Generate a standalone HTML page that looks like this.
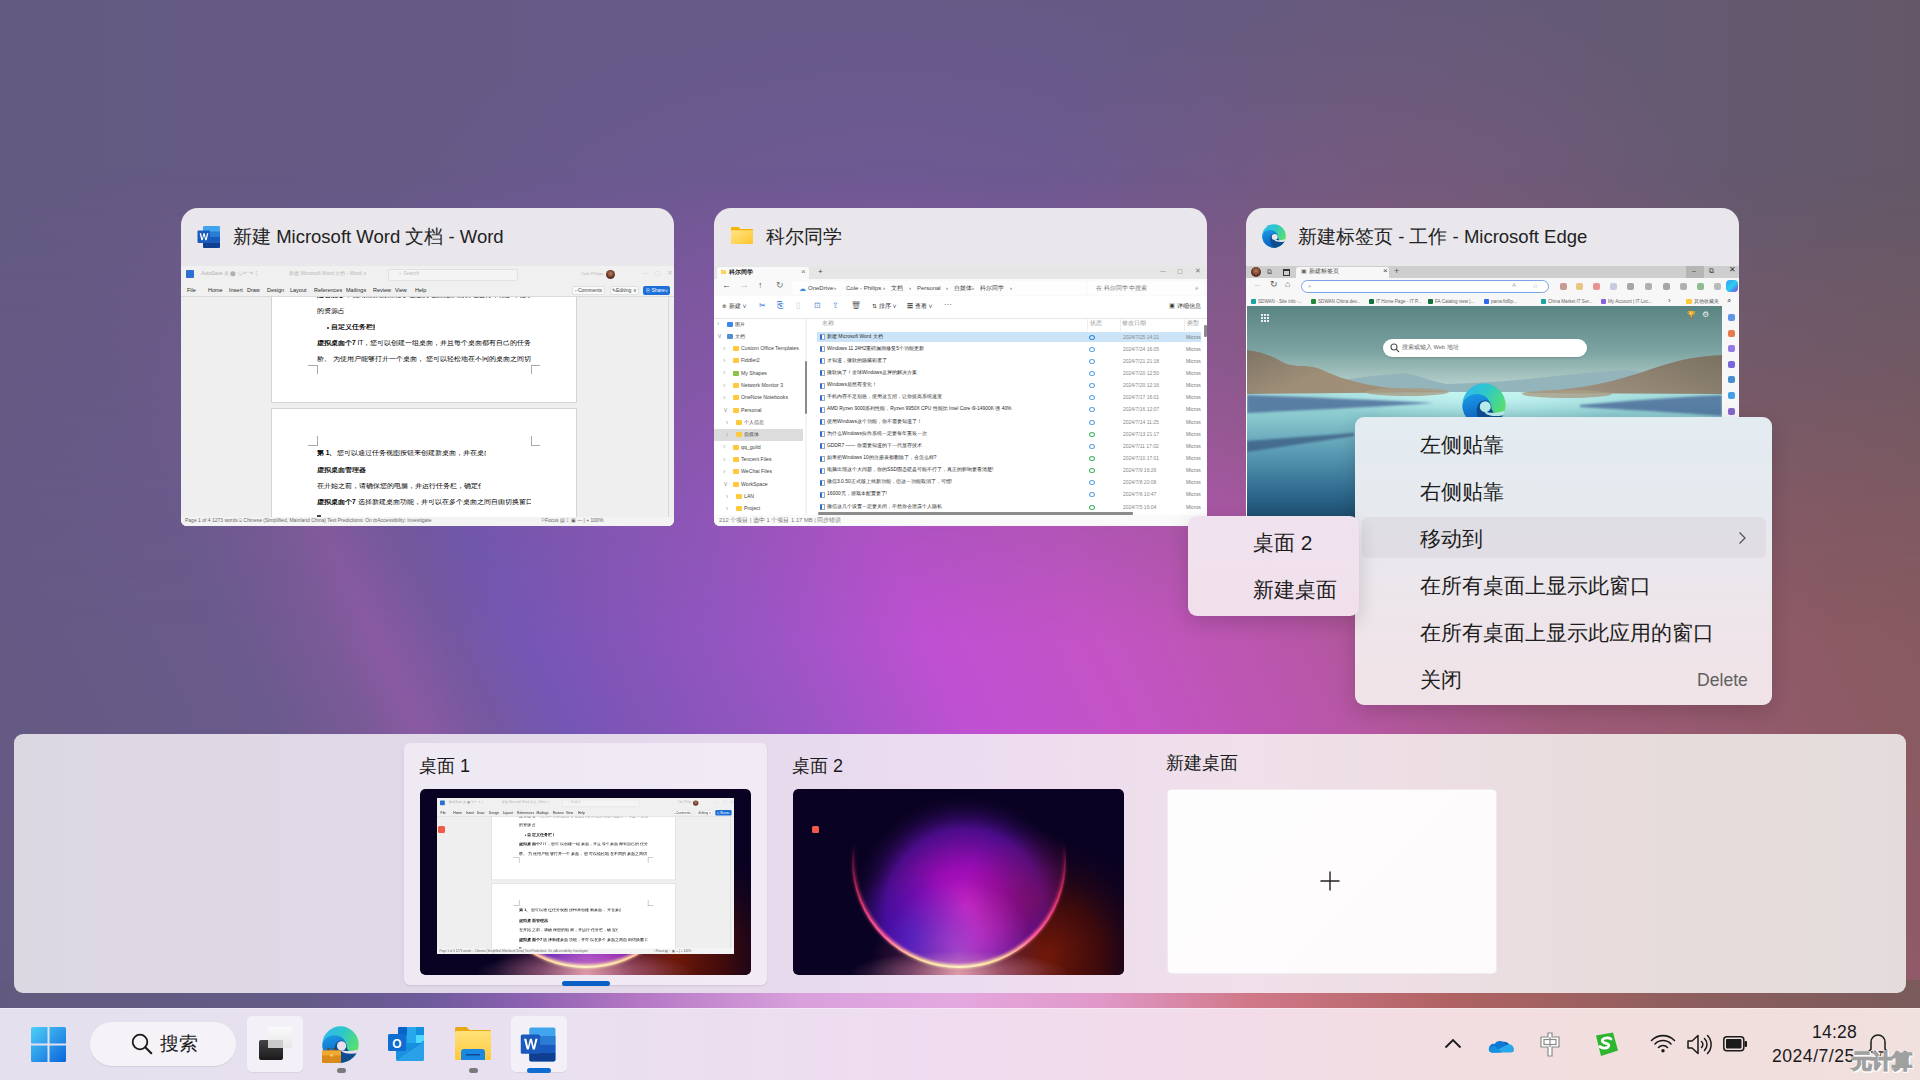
<!DOCTYPE html><html><head><meta charset="utf-8"><style>
*{box-sizing:border-box;margin:0;padding:0}
html,body{width:1920px;height:1080px;overflow:hidden}
body{position:relative;font-family:"Liberation Sans",sans-serif;color:#1a1a1a;background:#645a7e}
.a{position:absolute}
.t{position:absolute;white-space:nowrap;line-height:1}
#bg{position:absolute;left:0;top:0;width:1920px;height:1080px;
background:
 radial-gradient(ellipse 520px 260px at 900px 240px, rgba(118,88,160,0.6), rgba(118,88,160,0) 100%),
 radial-gradient(ellipse 380px 300px at 1380px 280px, rgba(128,90,125,0.8), rgba(128,90,125,0) 100%),
 radial-gradient(ellipse 420px 380px at 120px 760px, rgba(114,90,150,0.55), rgba(114,90,150,0) 100%),
 linear-gradient(90deg, #635a80 0%, #665a88 30%, #655a86 55%, #645a78 78%, #645868 100%);}
#bg2{position:absolute;left:0;top:0;width:1920px;height:1080px;
background:linear-gradient(65deg,#635a80 0%,#665a86 12%,#6a5a8c 18%,#7a5a98 22%,#8a5aa2 24%,#7558a0 27%,#7456b4 30%,#8455b8 34%,#9a55c4 40%,#c050d2 47%,#c454c4 54%,#b856a8 62%,#a05a7a 71%,#8a5a62 85%,#7e5a5a 100%);
-webkit-mask-image:linear-gradient(to bottom, rgba(0,0,0,0) 170px, rgba(0,0,0,0.4) 360px, rgba(0,0,0,0.8) 520px, rgba(0,0,0,1) 640px);}
.card{position:absolute;top:208px;width:493px;height:318px;border-radius:17px 17px 6px 6px;overflow:hidden;background:#e9e7ec}
.ttl{position:absolute;top:19px;font-size:18.5px;line-height:20px;color:#222;white-space:nowrap}
.body{position:absolute;left:0;top:58px;width:493px;height:260px;background:#fff;overflow:hidden}
.menu{position:absolute;border-radius:9px;box-shadow:0 6px 20px rgba(0,0,0,0.16)}
.mi{position:absolute;font-size:21px;line-height:24px;color:#1c1c1c;white-space:nowrap}
.dl{position:absolute;font-size:18px;line-height:20px;color:#1a1a1a;white-space:nowrap}
</style></head><body><div id="bg"></div><div id="bg2"></div>
<div class="card" style="left:181px"><svg class="a" style="left:16px;top:17px" width="24" height="24" viewBox="0 0 24 24">
<defs><linearGradient id="wg16" x1="0" y1="0" x2="0" y2="1"><stop offset="0" stop-color="#41a5ee"/><stop offset="0.33" stop-color="#2b7cd3"/><stop offset="0.66" stop-color="#185abd"/><stop offset="1" stop-color="#103f91"/></linearGradient></defs>
<rect x="6" y="1" width="17" height="22" rx="1.2" fill="#41a5ee"/>
<rect x="6" y="6.5" width="17" height="5.5" fill="#2b7cd3"/>
<rect x="6" y="12" width="17" height="5.5" fill="#185abd"/>
<path d="M6 17.5h17v4.3a1.2 1.2 0 0 1-1.2 1.2H7.2A1.2 1.2 0 0 1 6 21.8z" fill="#103f91"/>
<rect x="0.5" y="5.5" width="12.5" height="12.5" rx="1" fill="#185abd"/>
<path d="M2.6 8.3h1.5l1.1 5.2 1.2-5.2h1.3l1.2 5.2 1.1-5.2h1.4l-1.8 7h-1.3L7 10.2l-1.3 5.1H4.4z" fill="#fff"/>
</svg><div class="ttl" style="left:52px">新建 Microsoft Word 文档 - Word</div><div class="body"><div class="a" style="left:0px;top:31px;width:493px;height:220px;background:#efefef;"></div><div class="a" style="left:487px;top:31px;width:1px;height:220px;background:#d8d8d8;"></div><div class="a" style="left:90px;top:20px;width:306px;height:117px;background:#fff;border:1px solid #d4d4d4;border-top:none"></div><div class="a" style="left:90px;top:142px;width:306px;height:110px;background:#fff;border:1px solid #d4d4d4;border-bottom:none"></div><div class="a" style="left:127px;top:99px;width:9px;height:1px;background:#aaa;"></div><div class="a" style="left:136px;top:99px;width:1px;height:9px;background:#aaa;"></div><div class="a" style="left:350px;top:99px;width:9px;height:1px;background:#aaa;"></div><div class="a" style="left:350px;top:99px;width:1px;height:9px;background:#aaa;"></div><div class="a" style="left:127px;top:179px;width:9px;height:1px;background:#aaa;"></div><div class="a" style="left:136px;top:170px;width:1px;height:10px;background:#aaa;"></div><div class="a" style="left:350px;top:179px;width:9px;height:1px;background:#aaa;"></div><div class="a" style="left:350px;top:170px;width:1px;height:10px;background:#aaa;"></div><div class="t" style="left:136px;top:26px;width:214px;overflow:hidden;font-size:6.6px;color:#000;font-weight:500"><b>是否能够</b>，使用虚拟桌面能够让您的电脑更加流畅地运行，减少不必要的卡顿现象，提高</div><div class="t" style="left:136px;top:42px;width:28px;overflow:hidden;font-size:6.6px;color:#000;font-weight:500">的资源占用。</div><div class="a" style="left:146px;top:61px;width:2px;height:2px;background:#222;border-radius:50%"></div><div class="t" style="left:150px;top:58px;width:44px;overflow:hidden;font-size:6.6px;color:#111;font-weight:bold">自定义任务栏图标</div><div class="t" style="left:136px;top:74px;width:214px;overflow:hidden;font-size:6.6px;color:#000;font-weight:500"><b>虚拟桌面个7</b> IT，您可以创建一组桌面，并且每个桌面都有自己的任务栏，使用起来</div><div class="t" style="left:136px;top:90px;width:214px;overflow:hidden;font-size:6.6px;color:#000;font-weight:500">桥。 为使用户能够打开一个桌面， 您可以轻松地在不同的桌面之间切换和移动窗口</div><div class="t" style="left:136px;top:184px;width:169px;overflow:hidden;font-size:6.6px;color:#000;font-weight:500"><b>第 1、</b>您可以通过任务视图按钮来创建新桌面，并在桌面之间切换。</div><div class="t" style="left:136px;top:201px;width:49px;overflow:hidden;font-size:6.6px;color:#111;font-weight:bold">虚拟桌面管理器</div><div class="t" style="left:136px;top:217px;width:164px;overflow:hidden;font-size:6.6px;color:#000;font-weight:500">在开始之前，请确保您的电脑，并运行任务栏，确定任务视图按钮。</div><div class="t" style="left:136px;top:233px;width:214px;overflow:hidden;font-size:6.6px;color:#000;font-weight:500"><b>虚拟桌面个7</b> 选择新建桌面功能，并可以在多个桌面之间自由切换窗口和应用程序</div><div class="a" style="left:136px;top:249px;width:4px;height:2px;background:#444;"></div><div class="a" style="left:0px;top:0px;width:493px;height:31px;background:#f0f0f0;"></div><div class="a" style="left:5px;top:4px;width:8px;height:8px;background:#2b6fd0;border-radius:1px"></div><div class="t" style="left:20px;top:5px;font-size:5px;color:#b0b0b0;font-weight:normal;">AutoSave 关 ⬤ 🖫 ↶ ↷ ⋮</div><div class="t" style="left:108px;top:5px;font-size:5px;color:#b8b8b8;font-weight:normal;">新建 Microsoft Word 文档 - Word ∨</div><div class="a" style="left:207px;top:3px;width:130px;height:12px;background:#f4f4f4;border:1px solid #e2e2e2;border-radius:2px"></div><div class="t" style="left:218px;top:5px;font-size:5px;color:#c0c0c0;font-weight:normal;">⌕ Search</div><div class="t" style="left:400px;top:5.5px;font-size:4.3px;color:#b8b8b8;font-weight:normal;">Cole Philips</div><div class="a" style="left:425px;top:4px;width:9px;height:9px;background:radial-gradient(circle at 50% 40%,#c08060,#603020 60%,#404050);border-radius:50%"></div><div class="t" style="left:461px;top:4px;font-size:6px;color:#d0d0d0;font-weight:normal;">—</div><div class="t" style="left:474px;top:4px;font-size:6px;color:#d0d0d0;font-weight:normal;">▢</div><div class="t" style="left:486px;top:3px;font-size:7px;color:#c8c8c8;font-weight:normal;">✕</div><div class="t" style="left:6px;top:22px;font-size:5.5px;color:#2a2a2a;font-weight:normal;">File</div><div class="t" style="left:27px;top:22px;font-size:5.5px;color:#2a2a2a;font-weight:normal;">Home</div><div class="t" style="left:48px;top:22px;font-size:5.5px;color:#2a2a2a;font-weight:normal;">Insert</div><div class="t" style="left:66px;top:22px;font-size:5.5px;color:#2a2a2a;font-weight:normal;">Draw</div><div class="t" style="left:86px;top:22px;font-size:5.5px;color:#2a2a2a;font-weight:normal;">Design</div><div class="t" style="left:109px;top:22px;font-size:5.5px;color:#2a2a2a;font-weight:normal;">Layout</div><div class="t" style="left:133px;top:22px;font-size:5.5px;color:#2a2a2a;font-weight:normal;">References</div><div class="t" style="left:165px;top:22px;font-size:5.5px;color:#2a2a2a;font-weight:normal;">Mailings</div><div class="t" style="left:192px;top:22px;font-size:5.5px;color:#2a2a2a;font-weight:normal;">Review</div><div class="t" style="left:214px;top:22px;font-size:5.5px;color:#2a2a2a;font-weight:normal;">View</div><div class="t" style="left:234px;top:22px;font-size:5.5px;color:#2a2a2a;font-weight:normal;">Help</div><div class="a" style="left:391px;top:20px;width:33px;height:9px;background:#fafafa;border:1px solid #e0e0e0;border-radius:2px"></div><div class="t" style="left:394px;top:22px;font-size:5px;color:#444;font-weight:normal;">⌐Comments</div><div class="a" style="left:429px;top:20px;width:29px;height:9px;background:#fafafa;border:1px solid #e0e0e0;border-radius:2px"></div><div class="t" style="left:431px;top:22px;font-size:5px;color:#444;font-weight:normal;">✎Editing ∨</div><div class="a" style="left:462px;top:20px;width:27px;height:9px;background:#1f6fd8;border-radius:2px"></div><div class="t" style="left:465px;top:22px;font-size:5px;color:#fff;font-weight:normal;">⎘ Share∨</div><div class="a" style="left:0px;top:30px;width:493px;height:1px;background:#dadada;"></div><div class="a" style="left:0px;top:251px;width:493px;height:9px;background:#f3f3f3;"></div><div class="t" style="left:4px;top:252px;font-size:5px;color:#6a6a6a;font-weight:normal;">Page 1 of 4   1273 words   ⌸   Chinese (Simplified, Mainland China)   Text Predictions: On   ⚙Accessibility: Investigate</div><div class="t" style="left:360px;top:252px;font-size:5px;color:#666;font-weight:normal;">⚐Focus    ▤    ⌶    ▣    —         |          +  100%</div></div></div>
<div class="card" style="left:714px"><svg class="a" style="left:17px;top:19px" width="22" height="17" viewBox="0 0 22 17" preserveAspectRatio="none">
<defs><linearGradient id="fg1719" x1="0" y1="0" x2="1" y2="1"><stop offset="0" stop-color="#ffe38a"/><stop offset="1" stop-color="#ffc629"/></linearGradient></defs>
<path d="M0 1a1 1 0 0 1 1-1h6.5l1.8 2H21a1 1 0 0 1 1 1v2H0z" fill="#f5b400"/>
<rect x="0" y="3.2" width="22" height="13.8" rx="1" fill="url(#fg1719)"/>
</svg><div class="ttl" style="left:52px">科尔同学</div><div class="body"><div class="a" style="left:0px;top:0px;width:493px;height:13px;background:#e6e6e6;"></div><div class="a" style="left:3px;top:1px;width:92px;height:12px;background:#f9f9f9;border-radius:3px 3px 0 0"></div><svg class="a" style="left:7px;top:4px" width="5" height="4" viewBox="0 0 22 17" preserveAspectRatio="none">
<defs><linearGradient id="fg74" x1="0" y1="0" x2="1" y2="1"><stop offset="0" stop-color="#ffe38a"/><stop offset="1" stop-color="#ffc629"/></linearGradient></defs>
<path d="M0 1a1 1 0 0 1 1-1h6.5l1.8 2H21a1 1 0 0 1 1 1v2H0z" fill="#f5b400"/>
<rect x="0" y="3.2" width="22" height="13.8" rx="1" fill="url(#fg74)"/>
</svg><div class="t" style="left:15px;top:3px;font-size:6px;color:#222;font-weight:bold;">科尔同学</div><div class="t" style="left:87px;top:2px;font-size:8px;color:#777;font-weight:normal;">×</div><div class="t" style="left:104px;top:2px;font-size:8px;color:#444;font-weight:normal;">+</div><div class="t" style="left:446px;top:2px;font-size:6px;color:#777;font-weight:normal;">—</div><div class="t" style="left:463px;top:2px;font-size:6px;color:#777;font-weight:normal;">▢</div><div class="t" style="left:481px;top:1px;font-size:7px;color:#777;font-weight:normal;">✕</div><div class="a" style="left:0px;top:13px;width:493px;height:17px;background:#f9f9f9;"></div><div class="t" style="left:8px;top:15px;font-size:9px;color:#555;font-weight:normal;">←</div><div class="t" style="left:26px;top:15px;font-size:9px;color:#bbb;font-weight:normal;">→</div><div class="t" style="left:44px;top:15px;font-size:9px;color:#555;font-weight:normal;">↑</div><div class="t" style="left:62px;top:15px;font-size:9px;color:#777;font-weight:normal;">↻</div><div class="a" style="left:78px;top:15px;width:294px;height:14px;background:#fdfdfd;border-radius:3px"></div><div class="t" style="left:85px;top:19px;font-size:7px;color:#3a8ad8;font-weight:normal;">☁</div><div class="t" style="left:94px;top:19px;font-size:6px;color:#444;font-weight:normal;">OneDrive</div><div class="t" style="left:120px;top:19px;font-size:6px;color:#444;font-weight:normal;">›</div><div class="t" style="left:132px;top:19px;font-size:6px;color:#444;font-weight:normal;">Cole - Philips</div><div class="t" style="left:169px;top:19px;font-size:6px;color:#444;font-weight:normal;">›</div><div class="t" style="left:177px;top:19px;font-size:6px;color:#444;font-weight:normal;">文档</div><div class="t" style="left:195px;top:19px;font-size:6px;color:#444;font-weight:normal;">›</div><div class="t" style="left:203px;top:19px;font-size:6px;color:#444;font-weight:normal;">Personal</div><div class="t" style="left:232px;top:19px;font-size:6px;color:#444;font-weight:normal;">›</div><div class="t" style="left:240px;top:19px;font-size:6px;color:#444;font-weight:normal;">自媒体</div><div class="t" style="left:258px;top:19px;font-size:6px;color:#444;font-weight:normal;">›</div><div class="t" style="left:266px;top:19px;font-size:6px;color:#444;font-weight:normal;">科尔同学</div><div class="t" style="left:296px;top:19px;font-size:6px;color:#444;font-weight:normal;">›</div><div class="a" style="left:374px;top:15px;width:116px;height:14px;background:#fdfdfd;border-radius:3px"></div><div class="t" style="left:382px;top:19px;font-size:6.2px;color:#777;font-weight:normal;">在 科尔同学 中搜索</div><div class="t" style="left:481px;top:18px;font-size:7px;color:#666;font-weight:normal;">⌕</div><div class="a" style="left:0px;top:30px;width:493px;height:22px;background:#ffffff;"></div><div class="t" style="left:8px;top:37px;font-size:6px;color:#333;font-weight:normal;">⊕ 新建 ∨</div><div class="t" style="left:45px;top:36px;font-size:8px;color:#2d6fd4;font-weight:normal;">✂</div><div class="t" style="left:63px;top:36px;font-size:8px;color:#3a7ad0;font-weight:normal;">⎘</div><div class="t" style="left:82px;top:36px;font-size:8px;color:#ccc;font-weight:normal;">▯</div><div class="t" style="left:100px;top:36px;font-size:8px;color:#5588cc;font-weight:normal;">⊡</div><div class="t" style="left:118px;top:36px;font-size:8px;color:#4a88dd;font-weight:normal;">⇪</div><div class="t" style="left:137px;top:36px;font-size:8px;color:#666;font-weight:normal;">🗑</div><div class="t" style="left:158px;top:37px;font-size:6px;color:#333;font-weight:normal;">⇅ 排序 ∨</div><div class="t" style="left:193px;top:37px;font-size:6px;color:#333;font-weight:normal;">☰ 查看 ∨</div><div class="t" style="left:230px;top:35px;font-size:8px;color:#333;font-weight:normal;">···</div><div class="t" style="left:455px;top:37px;font-size:6px;color:#333;font-weight:normal;">▣ 详细信息</div><div class="a" style="left:0px;top:52px;width:493px;height:1px;background:#e6e6e6;"></div><div class="t" style="left:3px;top:54.0px;font-size:7px;color:#aaa;font-weight:normal;">›</div><div class="a" style="left:13px;top:55.5px;width:6px;height:5px;background:#3a88e8;border-radius:1px"></div><div class="t" style="left:21px;top:55.5px;font-size:5.2px;color:#444;font-weight:normal;">图片</div><div class="t" style="left:3px;top:66.33px;font-size:7px;color:#aaa;font-weight:normal;">∨</div><div class="a" style="left:13px;top:67.83px;width:6px;height:5px;background:#5090d0;border-radius:1px"></div><div class="t" style="left:21px;top:67.83px;font-size:5.2px;color:#444;font-weight:normal;">文档</div><div class="t" style="left:9px;top:78.66px;font-size:7px;color:#aaa;font-weight:normal;">›</div><div class="a" style="left:19px;top:80.16px;width:6px;height:5px;background:#ffc83d;border-radius:1px"></div><div class="t" style="left:27px;top:80.16px;font-size:5.2px;color:#444;font-weight:normal;">Custom Office Templates</div><div class="t" style="left:9px;top:90.99000000000001px;font-size:7px;color:#aaa;font-weight:normal;">›</div><div class="a" style="left:19px;top:92.49000000000001px;width:6px;height:5px;background:#ffc83d;border-radius:1px"></div><div class="t" style="left:27px;top:92.49000000000001px;font-size:5.2px;color:#444;font-weight:normal;">Fiddler2</div><div class="t" style="left:9px;top:103.32px;font-size:7px;color:#aaa;font-weight:normal;">›</div><div class="a" style="left:19px;top:104.82px;width:6px;height:5px;background:#8bc34a;border-radius:1px"></div><div class="t" style="left:27px;top:104.82px;font-size:5.2px;color:#444;font-weight:normal;">My Shapes</div><div class="t" style="left:9px;top:115.65px;font-size:7px;color:#aaa;font-weight:normal;">›</div><div class="a" style="left:19px;top:117.15px;width:6px;height:5px;background:#ffc83d;border-radius:1px"></div><div class="t" style="left:27px;top:117.15px;font-size:5.2px;color:#444;font-weight:normal;">Network Monitor 3</div><div class="t" style="left:9px;top:127.98000000000002px;font-size:7px;color:#aaa;font-weight:normal;">›</div><div class="a" style="left:19px;top:129.48000000000002px;width:6px;height:5px;background:#ffc83d;border-radius:1px"></div><div class="t" style="left:27px;top:129.48000000000002px;font-size:5.2px;color:#444;font-weight:normal;">OneNote Notebooks</div><div class="t" style="left:9px;top:140.31px;font-size:7px;color:#aaa;font-weight:normal;">∨</div><div class="a" style="left:19px;top:141.81px;width:6px;height:5px;background:#ffc83d;border-radius:1px"></div><div class="t" style="left:27px;top:141.81px;font-size:5.2px;color:#444;font-weight:normal;">Personal</div><div class="t" style="left:12px;top:152.64px;font-size:7px;color:#aaa;font-weight:normal;">›</div><div class="a" style="left:22px;top:154.14px;width:6px;height:5px;background:#ffc83d;border-radius:1px"></div><div class="t" style="left:30px;top:154.14px;font-size:5.2px;color:#444;font-weight:normal;">个人信息</div><div class="a" style="left:0px;top:162.97px;width:89px;height:12px;background:#dcdcdc;"></div><div class="t" style="left:12px;top:164.97px;font-size:7px;color:#aaa;font-weight:normal;">›</div><div class="a" style="left:22px;top:166.47px;width:6px;height:5px;background:#ffc83d;border-radius:1px"></div><div class="t" style="left:30px;top:166.47px;font-size:5.2px;color:#444;font-weight:normal;">自媒体</div><div class="t" style="left:9px;top:177.3px;font-size:7px;color:#aaa;font-weight:normal;">›</div><div class="a" style="left:19px;top:178.8px;width:6px;height:5px;background:#ffc83d;border-radius:1px"></div><div class="t" style="left:27px;top:178.8px;font-size:5.2px;color:#444;font-weight:normal;">qq_guild</div><div class="t" style="left:9px;top:189.63px;font-size:7px;color:#aaa;font-weight:normal;">›</div><div class="a" style="left:19px;top:191.13px;width:6px;height:5px;background:#ffc83d;border-radius:1px"></div><div class="t" style="left:27px;top:191.13px;font-size:5.2px;color:#444;font-weight:normal;">Tencent Files</div><div class="t" style="left:9px;top:201.96px;font-size:7px;color:#aaa;font-weight:normal;">›</div><div class="a" style="left:19px;top:203.46px;width:6px;height:5px;background:#ffc83d;border-radius:1px"></div><div class="t" style="left:27px;top:203.46px;font-size:5.2px;color:#444;font-weight:normal;">WeChat Files</div><div class="t" style="left:9px;top:214.29px;font-size:7px;color:#aaa;font-weight:normal;">∨</div><div class="a" style="left:19px;top:215.79px;width:6px;height:5px;background:#ffc83d;border-radius:1px"></div><div class="t" style="left:27px;top:215.79px;font-size:5.2px;color:#444;font-weight:normal;">WorkSpace</div><div class="t" style="left:12px;top:226.62px;font-size:7px;color:#aaa;font-weight:normal;">›</div><div class="a" style="left:22px;top:228.12px;width:6px;height:5px;background:#ffc83d;border-radius:1px"></div><div class="t" style="left:30px;top:228.12px;font-size:5.2px;color:#444;font-weight:normal;">LAN</div><div class="t" style="left:12px;top:238.95px;font-size:7px;color:#aaa;font-weight:normal;">›</div><div class="a" style="left:22px;top:240.45px;width:6px;height:5px;background:#ffc83d;border-radius:1px"></div><div class="t" style="left:30px;top:240.45px;font-size:5.2px;color:#444;font-weight:normal;">Project</div><div class="a" style="left:91px;top:53px;width:2px;height:198px;background:#f4f4f4;"></div><div class="a" style="left:91px;top:95px;width:2px;height:53px;background:#8a8a8a;border-radius:1px"></div><div class="t" style="left:108px;top:55px;font-size:5.5px;color:#999;font-weight:normal;">名称</div><div class="a" style="left:373px;top:53px;width:1px;height:12px;background:#eee;"></div><div class="t" style="left:376px;top:55px;font-size:5.5px;color:#999;font-weight:normal;">状态</div><div class="a" style="left:406px;top:53px;width:1px;height:12px;background:#eee;"></div><div class="t" style="left:408px;top:55px;font-size:5.5px;color:#999;font-weight:normal;">修改日期</div><div class="a" style="left:470px;top:53px;width:1px;height:12px;background:#eee;"></div><div class="t" style="left:473px;top:55px;font-size:5.5px;color:#999;font-weight:normal;">类型</div><div class="a" style="left:103px;top:65.5px;width:384px;height:10px;background:#cce4f7;"></div><div class="a" style="left:106px;top:68.0px;width:5px;height:6px;background:#fff;border:1px solid #9ab;border-left:2px solid #2f6bd0;border-radius:1px"></div><div class="t" style="left:113px;top:68.5px;font-size:4.9px;color:#2a2a2a;font-weight:normal;">新建 Microsoft Word 文档</div><div class="a" style="left:375px;top:68.5px;width:6px;height:5px;background:transparent;border:1px solid #2a88d8;border-radius:50%"></div><div class="t" style="left:409px;top:68.5px;font-size:5px;color:#888;font-weight:normal;">2024/7/25 14:21</div><div class="t" style="left:472px;top:68.5px;font-size:5px;color:#777;font-weight:normal;">Micros</div><div class="a" style="left:106px;top:80.15px;width:5px;height:6px;background:#fff;border:1px solid #9ab;border-left:2px solid #2f6bd0;border-radius:1px"></div><div class="t" style="left:113px;top:80.65px;font-size:4.9px;color:#2a2a2a;font-weight:normal;">Windows 11 24H2重磅漏洞修复5个功能更新</div><div class="a" style="left:375px;top:80.65px;width:6px;height:5px;background:transparent;border:1px solid #5aa0e0;border-radius:50%"></div><div class="t" style="left:409px;top:80.65px;font-size:5px;color:#888;font-weight:normal;">2024/7/24 16:05</div><div class="t" style="left:472px;top:80.65px;font-size:5px;color:#777;font-weight:normal;">Micros</div><div class="a" style="left:106px;top:92.3px;width:5px;height:6px;background:#fff;border:1px solid #9ab;border-left:2px solid #2f6bd0;border-radius:1px"></div><div class="t" style="left:113px;top:92.8px;font-size:4.9px;color:#2a2a2a;font-weight:normal;">才知道，微软的隐藏彩蛋了</div><div class="a" style="left:375px;top:92.8px;width:6px;height:5px;background:transparent;border:1px solid #5aa0e0;border-radius:50%"></div><div class="t" style="left:409px;top:92.8px;font-size:5px;color:#888;font-weight:normal;">2024/7/21 21:18</div><div class="t" style="left:472px;top:92.8px;font-size:5px;color:#777;font-weight:normal;">Micros</div><div class="a" style="left:106px;top:104.45px;width:5px;height:6px;background:#fff;border:1px solid #9ab;border-left:2px solid #2f6bd0;border-radius:1px"></div><div class="t" style="left:113px;top:104.95px;font-size:4.9px;color:#2a2a2a;font-weight:normal;">微软疯了！全球Windows蓝屏的解决方案</div><div class="a" style="left:375px;top:104.95px;width:6px;height:5px;background:transparent;border:1px solid #5aa0e0;border-radius:50%"></div><div class="t" style="left:409px;top:104.95px;font-size:5px;color:#888;font-weight:normal;">2024/7/20 12:50</div><div class="t" style="left:472px;top:104.95px;font-size:5px;color:#777;font-weight:normal;">Micros</div><div class="a" style="left:106px;top:116.6px;width:5px;height:6px;background:#fff;border:1px solid #9ab;border-left:2px solid #2f6bd0;border-radius:1px"></div><div class="t" style="left:113px;top:117.1px;font-size:4.9px;color:#2a2a2a;font-weight:normal;">Windows居然有变化！</div><div class="a" style="left:375px;top:117.1px;width:6px;height:5px;background:transparent;border:1px solid #5aa0e0;border-radius:50%"></div><div class="t" style="left:409px;top:117.1px;font-size:5px;color:#888;font-weight:normal;">2024/7/20 12:16</div><div class="t" style="left:472px;top:117.1px;font-size:5px;color:#777;font-weight:normal;">Micros</div><div class="a" style="left:106px;top:128.75px;width:5px;height:6px;background:#fff;border:1px solid #9ab;border-left:2px solid #2f6bd0;border-radius:1px"></div><div class="t" style="left:113px;top:129.25px;font-size:4.9px;color:#2a2a2a;font-weight:normal;">手机内存不足别急，使用这五招，让你提高系统速度</div><div class="a" style="left:375px;top:129.25px;width:6px;height:5px;background:transparent;border:1px solid #5aa0e0;border-radius:50%"></div><div class="t" style="left:409px;top:129.25px;font-size:5px;color:#888;font-weight:normal;">2024/7/17 16:01</div><div class="t" style="left:472px;top:129.25px;font-size:5px;color:#777;font-weight:normal;">Micros</div><div class="a" style="left:106px;top:140.9px;width:5px;height:6px;background:#fff;border:1px solid #9ab;border-left:2px solid #2f6bd0;border-radius:1px"></div><div class="t" style="left:113px;top:141.4px;font-size:4.9px;color:#2a2a2a;font-weight:normal;">AMD Ryzen 9000系列性能，Ryzen 9950X CPU 性能比 Intel Core i9-14900K 强 40%</div><div class="a" style="left:375px;top:141.4px;width:6px;height:5px;background:transparent;border:1px solid #5aa0e0;border-radius:50%"></div><div class="t" style="left:409px;top:141.4px;font-size:5px;color:#888;font-weight:normal;">2024/7/16 12:07</div><div class="t" style="left:472px;top:141.4px;font-size:5px;color:#777;font-weight:normal;">Micros</div><div class="a" style="left:106px;top:153.05px;width:5px;height:6px;background:#fff;border:1px solid #9ab;border-left:2px solid #2f6bd0;border-radius:1px"></div><div class="t" style="left:113px;top:153.55px;font-size:4.9px;color:#2a2a2a;font-weight:normal;">使用Windows这个功能，你不需要知道了！</div><div class="a" style="left:375px;top:153.55px;width:6px;height:5px;background:transparent;border:1px solid #5aa0e0;border-radius:50%"></div><div class="t" style="left:409px;top:153.55px;font-size:5px;color:#888;font-weight:normal;">2024/7/14 11:25</div><div class="t" style="left:472px;top:153.55px;font-size:5px;color:#777;font-weight:normal;">Micros</div><div class="a" style="left:106px;top:165.2px;width:5px;height:6px;background:#fff;border:1px solid #9ab;border-left:2px solid #2f6bd0;border-radius:1px"></div><div class="t" style="left:113px;top:165.7px;font-size:4.9px;color:#2a2a2a;font-weight:normal;">为什么Windows操作系统一定要每年重装一次</div><div class="a" style="left:375px;top:165.7px;width:6px;height:5px;background:transparent;border:1px solid #3cb05a;border-radius:50%"></div><div class="t" style="left:409px;top:165.7px;font-size:5px;color:#888;font-weight:normal;">2024/7/13 21:17</div><div class="t" style="left:472px;top:165.7px;font-size:5px;color:#777;font-weight:normal;">Micros</div><div class="a" style="left:106px;top:177.35000000000002px;width:5px;height:6px;background:#fff;border:1px solid #9ab;border-left:2px solid #2f6bd0;border-radius:1px"></div><div class="t" style="left:113px;top:177.85000000000002px;font-size:4.9px;color:#2a2a2a;font-weight:normal;">GDDR7 —— 你需要知道的下一代显存技术</div><div class="a" style="left:375px;top:177.85000000000002px;width:6px;height:5px;background:transparent;border:1px solid #5aa0e0;border-radius:50%"></div><div class="t" style="left:409px;top:177.85000000000002px;font-size:5px;color:#888;font-weight:normal;">2024/7/11 17:02</div><div class="t" style="left:472px;top:177.85000000000002px;font-size:5px;color:#777;font-weight:normal;">Micros</div><div class="a" style="left:106px;top:189.5px;width:5px;height:6px;background:#fff;border:1px solid #9ab;border-left:2px solid #2f6bd0;border-radius:1px"></div><div class="t" style="left:113px;top:190.0px;font-size:4.9px;color:#2a2a2a;font-weight:normal;">如果把Windows 10的注册表都删除了，会怎么样?</div><div class="a" style="left:375px;top:190.0px;width:6px;height:5px;background:transparent;border:1px solid #3cb05a;border-radius:50%"></div><div class="t" style="left:409px;top:190.0px;font-size:5px;color:#888;font-weight:normal;">2024/7/10 17:01</div><div class="t" style="left:472px;top:190.0px;font-size:5px;color:#777;font-weight:normal;">Micros</div><div class="a" style="left:106px;top:201.65px;width:5px;height:6px;background:#fff;border:1px solid #9ab;border-left:2px solid #2f6bd0;border-radius:1px"></div><div class="t" style="left:113px;top:202.15px;font-size:4.9px;color:#2a2a2a;font-weight:normal;">电脑出现这个大问题，你的SSD固态硬盘可能不行了，真正的影响要看清楚!</div><div class="a" style="left:375px;top:202.15px;width:6px;height:5px;background:transparent;border:1px solid #3cb05a;border-radius:50%"></div><div class="t" style="left:409px;top:202.15px;font-size:5px;color:#888;font-weight:normal;">2024/7/9 16:26</div><div class="t" style="left:472px;top:202.15px;font-size:5px;color:#777;font-weight:normal;">Micros</div><div class="a" style="left:106px;top:213.8px;width:5px;height:6px;background:#fff;border:1px solid #9ab;border-left:2px solid #2f6bd0;border-radius:1px"></div><div class="t" style="left:113px;top:214.3px;font-size:4.9px;color:#2a2a2a;font-weight:normal;">微信3.0.50正式版上线新功能，但这一功能取消了，可惜!</div><div class="a" style="left:375px;top:214.3px;width:6px;height:5px;background:transparent;border:1px solid #5aa0e0;border-radius:50%"></div><div class="t" style="left:409px;top:214.3px;font-size:5px;color:#888;font-weight:normal;">2024/7/8 20:08</div><div class="t" style="left:472px;top:214.3px;font-size:5px;color:#777;font-weight:normal;">Micros</div><div class="a" style="left:106px;top:225.95000000000002px;width:5px;height:6px;background:#fff;border:1px solid #9ab;border-left:2px solid #2f6bd0;border-radius:1px"></div><div class="t" style="left:113px;top:226.45000000000002px;font-size:4.9px;color:#2a2a2a;font-weight:normal;">16000元，游戏本配置要了!</div><div class="a" style="left:375px;top:226.45000000000002px;width:6px;height:5px;background:transparent;border:1px solid #5aa0e0;border-radius:50%"></div><div class="t" style="left:409px;top:226.45000000000002px;font-size:5px;color:#888;font-weight:normal;">2024/7/6 10:47</div><div class="t" style="left:472px;top:226.45000000000002px;font-size:5px;color:#777;font-weight:normal;">Micros</div><div class="a" style="left:106px;top:238.1px;width:5px;height:6px;background:#fff;border:1px solid #9ab;border-left:2px solid #2f6bd0;border-radius:1px"></div><div class="t" style="left:113px;top:238.6px;font-size:4.9px;color:#2a2a2a;font-weight:normal;">微信这几个设置一定要关闭，不然你会泄露个人隐私</div><div class="a" style="left:375px;top:238.6px;width:6px;height:5px;background:transparent;border:1px solid #3cb05a;border-radius:50%"></div><div class="t" style="left:409px;top:238.6px;font-size:5px;color:#888;font-weight:normal;">2024/7/5 16:04</div><div class="t" style="left:472px;top:238.6px;font-size:5px;color:#777;font-weight:normal;">Micros</div><div class="a" style="left:490px;top:59px;width:3px;height:12px;background:#8a8a8a;border-radius:1px"></div><div class="a" style="left:104px;top:246px;width:315px;height:3px;background:#8c8c8c;border-radius:1px"></div><div class="a" style="left:0px;top:249px;width:493px;height:11px;background:#fafafa;"></div><div class="t" style="left:5px;top:252px;font-size:5.8px;color:#777;font-weight:normal;">212 个项目  |  选中 1 个项目 1.17 MB  |  同步错误</div></div></div>
<div class="card" style="left:1246px"><svg class="a" style="left:16px;top:16px" width="24" height="24" viewBox="0 0 24 24">
<defs>
<linearGradient id="eg1hdr" x1="0" y1="0.1" x2="1" y2="0.7"><stop offset="0" stop-color="#33b6f2"/><stop offset="0.45" stop-color="#2ec8c8"/><stop offset="1" stop-color="#62e45c"/></linearGradient>
<linearGradient id="eg3hdr" x1="0" y1="0" x2="0.2" y2="1"><stop offset="0" stop-color="#1c9ce6"/><stop offset="1" stop-color="#0a5fc0"/></linearGradient>
<linearGradient id="eg2hdr" x1="0" y1="0" x2="0.3" y2="1"><stop offset="0" stop-color="#0b4f98"/><stop offset="1" stop-color="#0f4c8f"/></linearGradient>
<clipPath id="echdr"><circle cx="12" cy="12" r="11.8"/></clipPath>
</defs>
<g clip-path="url(#echdr)">
<rect width="24" height="24" fill="url(#eg1hdr)"/>
<path d="M0 13 C0.3 8.6 4 6 8.3 6 C11.6 6 14.3 8 15.2 10.6 L15.2 24 L0 24Z" fill="url(#eg3hdr)"/>
<path d="M8 15.2 C8 11.6 10.1 9.4 12.7 9.4 C14.7 9.4 16 11 16 12.9 C16 15.9 18.6 17.4 21.6 17.4 C22.6 17.4 23.4 17.2 24 16.9 L24 24 L12 24 C9.5 22 8 18.6 8 15.2Z" fill="url(#eg2hdr)"/>
<circle cx="12.7" cy="12.9" r="3" fill="#e9e7ec"/>
<path d="M12.5 15.6 C15 16.6 18.6 16.6 24 15 L24 17.3 C19.5 18.4 15.5 18.4 12.8 16.6Z" fill="#e9e7ec"/>
</g>
</svg><div class="ttl" style="left:52px">新建标签页 - 工作 - Microsoft Edge</div><div class="body"><div class="a" style="left:0px;top:0px;width:493px;height:12px;background:#cecece;"></div><div class="a" style="left:5px;top:1px;width:10px;height:10px;background:radial-gradient(circle at 50% 40%,#c08060,#603020 60%,#404050);border-radius:50%"></div><div class="t" style="left:21px;top:2px;font-size:7px;color:#555;font-weight:normal;">⧉</div><div class="a" style="left:37px;top:3px;width:7px;height:7px;background:transparent;border:1.2px solid #333;border-top-width:2px"></div><div class="a" style="left:50px;top:1px;width:93px;height:11px;background:#f7f7f7;border-radius:3px 3px 0 0"></div><div class="t" style="left:55px;top:2px;font-size:6px;color:#666;font-weight:normal;">▣</div><div class="t" style="left:63px;top:3px;font-size:5.5px;color:#444;font-weight:normal;">新建标签页</div><div class="t" style="left:137px;top:1px;font-size:8px;color:#444;font-weight:normal;">×</div><div class="t" style="left:148px;top:1px;font-size:9px;color:#555;font-weight:normal;">+</div><div class="a" style="left:440px;top:0px;width:18px;height:12px;background:#b6b6b6;"></div><div class="t" style="left:446px;top:1px;font-size:7px;color:#444;font-weight:normal;">–</div><div class="t" style="left:463px;top:1px;font-size:7px;color:#444;font-weight:normal;">⧉</div><div class="t" style="left:483px;top:0px;font-size:8px;color:#333;font-weight:normal;">✕</div><div class="a" style="left:0px;top:12px;width:493px;height:18px;background:#f7f7f7;"></div><div class="t" style="left:7px;top:14px;font-size:9px;color:#ccc;font-weight:normal;">←</div><div class="t" style="left:24px;top:14px;font-size:9px;color:#555;font-weight:normal;">↻</div><div class="t" style="left:39px;top:14px;font-size:9px;color:#555;font-weight:normal;">⌂</div><div class="a" style="left:55px;top:14px;width:248px;height:13px;background:#fff;border:1.3px solid #7aa3e8;border-radius:7px"></div><div class="t" style="left:62px;top:16px;font-size:7px;color:#888;font-weight:normal;">⌕</div><div class="t" style="left:286px;top:16px;font-size:7px;color:#999;font-weight:normal;">☆</div><div class="t" style="left:266px;top:16px;font-size:6px;color:#aaa;font-weight:normal;">A</div><div class="a" style="left:314px;top:17px;width:7px;height:7px;background:#a05040;border-radius:2px;opacity:0.55"></div><div class="a" style="left:330px;top:17px;width:7px;height:7px;background:#e0a020;border-radius:2px;opacity:0.55"></div><div class="a" style="left:347px;top:17px;width:7px;height:7px;background:#e04040;border-radius:2px;opacity:0.55"></div><div class="a" style="left:364px;top:17px;width:7px;height:7px;background:#a0a8d0;border-radius:2px;opacity:0.55"></div><div class="a" style="left:381px;top:17px;width:7px;height:7px;background:#666;border-radius:2px;opacity:0.55"></div><div class="a" style="left:399px;top:17px;width:7px;height:7px;background:#777;border-radius:2px;opacity:0.55"></div><div class="a" style="left:417px;top:17px;width:7px;height:7px;background:#666;border-radius:2px;opacity:0.55"></div><div class="a" style="left:434px;top:17px;width:7px;height:7px;background:#777;border-radius:2px;opacity:0.55"></div><div class="a" style="left:451px;top:17px;width:7px;height:7px;background:#3a8a3a;border-radius:2px;opacity:0.55"></div><div class="a" style="left:468px;top:17px;width:7px;height:7px;background:#888;border-radius:2px;opacity:0.55"></div><div class="a" style="left:480px;top:14px;width:12px;height:12px;background:linear-gradient(135deg,#3a9af0,#2ad0f0,#8040e0);border-radius:4px"></div><div class="a" style="left:0px;top:30px;width:493px;height:10px;background:#f7f7f7;"></div><div class="a" style="left:5px;top:32.5px;width:5px;height:5px;background:#1aa3a3;border-radius:1px"></div><div class="a" style="left:12px;top:31.5px;width:46px;height:8px;overflow:hidden;white-space:nowrap;line-height:8px;font-size:4.6px;color:#666">SDWAN - Site info -...</div><div class="a" style="left:65px;top:32.5px;width:5px;height:5px;background:#1e8a3a;border-radius:1px"></div><div class="a" style="left:72px;top:31.5px;width:46px;height:8px;overflow:hidden;white-space:nowrap;line-height:8px;font-size:4.6px;color:#666">SDWAN China dev...</div><div class="a" style="left:123px;top:32.5px;width:5px;height:5px;background:#12703a;border-radius:1px"></div><div class="a" style="left:130px;top:31.5px;width:46px;height:8px;overflow:hidden;white-space:nowrap;line-height:8px;font-size:4.6px;color:#666">IT Home Page - IT P...</div><div class="a" style="left:182px;top:32.5px;width:5px;height:5px;background:#12703a;border-radius:1px"></div><div class="a" style="left:189px;top:31.5px;width:46px;height:8px;overflow:hidden;white-space:nowrap;line-height:8px;font-size:4.6px;color:#666">FA Catalog view |...</div><div class="a" style="left:238px;top:32.5px;width:5px;height:5px;background:#2a6ae8;border-radius:1px"></div><div class="a" style="left:245px;top:31.5px;width:46px;height:8px;overflow:hidden;white-space:nowrap;line-height:8px;font-size:4.6px;color:#666">panw.fid6p...</div><div class="a" style="left:295px;top:32.5px;width:5px;height:5px;background:#1aa3a3;border-radius:1px"></div><div class="a" style="left:302px;top:31.5px;width:46px;height:8px;overflow:hidden;white-space:nowrap;line-height:8px;font-size:4.6px;color:#666">China Market IT Ser...</div><div class="a" style="left:355px;top:32.5px;width:5px;height:5px;background:#8a60e0;border-radius:1px"></div><div class="a" style="left:362px;top:31.5px;width:46px;height:8px;overflow:hidden;white-space:nowrap;line-height:8px;font-size:4.6px;color:#666">My Account | IT Loc...</div><div class="t" style="left:422px;top:31px;font-size:8px;color:#555;font-weight:normal;">›</div><div class="a" style="left:440px;top:32.5px;width:6px;height:5px;background:#ffc83d;border-radius:1px"></div><div class="t" style="left:448px;top:32.5px;font-size:5px;color:#555;font-weight:normal;">其他收藏夹</div><svg class="a" style="left:1px;top:40px" width="475" height="220" viewBox="0 0 475 220">
<defs>
<linearGradient id="sky" x1="0" y1="0" x2="0" y2="220" gradientUnits="userSpaceOnUse"><stop offset="0" stop-color="#5a8482"/><stop offset="0.2" stop-color="#7aa2a0"/><stop offset="0.32" stop-color="#a6c4c0"/><stop offset="0.4" stop-color="#c4dad6"/></linearGradient>
<linearGradient id="wat" x1="0" y1="0" x2="0" y2="1"><stop offset="0" stop-color="#a6dede"/><stop offset="0.2" stop-color="#86c6cc"/><stop offset="0.45" stop-color="#5a9ab4"/><stop offset="0.75" stop-color="#2e6a8e"/><stop offset="1" stop-color="#1a4466"/></linearGradient>
<radialGradient id="glow" cx="0.5" cy="0" r="0.5" gradientTransform="translate(0.0,0) scale(1,1)"><stop offset="0" stop-color="#c8f8f4" stop-opacity="1"/><stop offset="1" stop-color="#c8f8f4" stop-opacity="0"/></radialGradient>
<linearGradient id="hillL" x1="0" y1="0" x2="1" y2="0.5"><stop offset="0" stop-color="#7e7464"/><stop offset="0.5" stop-color="#9e8e78"/><stop offset="1" stop-color="#a09078"/></linearGradient>
<linearGradient id="hillR" x1="1" y1="0" x2="0" y2="0.5"><stop offset="0" stop-color="#7a7262"/><stop offset="0.5" stop-color="#8e8270"/><stop offset="1" stop-color="#a09280"/></linearGradient>
<filter id="bl1"><feGaussianBlur stdDeviation="0.8"/></filter>
</defs>
<rect width="475" height="220" fill="url(#sky)"/>
<path d="M60 80 C90 74 120 70 158 67 C175 70 185 76 200 78 C230 77 260 76 290 72 C320 69 340 66 380 64 L420 70 L420 90 L60 90z" fill="#94b4bc"/>
<rect x="0" y="86" width="475" height="134" fill="url(#wat)"/>
<rect x="60" y="86" width="360" height="60" fill="url(#glow)"/>
<path d="M0 44 C10 45 20 48 30 53 C38 58 45 60 55 60 C65 60 72 62 80 66 C95 73 115 78 135 81 C160 84 180 85 200 86 L0 88z" fill="url(#hillL)"/>
<path d="M475 49 C455 50 440 52 420 58 C400 64 385 70 365 75 C340 81 310 85 272 87 L475 88z" fill="url(#hillR)"/>
<ellipse cx="160" cy="86" rx="42" ry="4" fill="#a89c84" opacity="0.8"/><ellipse cx="320" cy="88" rx="45" ry="4" fill="#a89c84" opacity="0.8"/>
<path d="M0 89 C60 91 130 94 187 97 C130 101 60 104 0 107z" fill="#50709c" opacity="0.85" filter="url(#bl1)"/>
<path d="M333 99 C380 95 430 91 475 89 L475 110 C440 107 400 105 333 101z" fill="#50709c" opacity="0.85" filter="url(#bl1)"/>
<path d="M0 135 L107 127 L107 130 L0 146z" fill="#3a5a80" opacity="0.75" filter="url(#bl1)"/>
</svg><div class="a" style="left:15px;top:48px;width:2px;height:2px;background:#eef;"></div><div class="a" style="left:18px;top:48px;width:2px;height:2px;background:#eef;"></div><div class="a" style="left:21px;top:48px;width:2px;height:2px;background:#eef;"></div><div class="a" style="left:15px;top:51px;width:2px;height:2px;background:#eef;"></div><div class="a" style="left:18px;top:51px;width:2px;height:2px;background:#eef;"></div><div class="a" style="left:21px;top:51px;width:2px;height:2px;background:#eef;"></div><div class="a" style="left:15px;top:54px;width:2px;height:2px;background:#eef;"></div><div class="a" style="left:18px;top:54px;width:2px;height:2px;background:#eef;"></div><div class="a" style="left:21px;top:54px;width:2px;height:2px;background:#eef;"></div><div class="t" style="left:441px;top:45px;font-size:7px;color:#eee;font-weight:normal;">🏆</div><div class="t" style="left:456px;top:45px;font-size:8px;color:#eee;font-weight:normal;">⚙</div><div class="a" style="left:137px;top:73px;width:204px;height:18px;background:#fff;border-radius:9px;box-shadow:0 1px 2px rgba(0,0,0,0.15)"></div><svg class="a" style="left:144px;top:77px" width="10" height="10" viewBox="0 0 10 10"><circle cx="4" cy="4" r="3" fill="none" stroke="#555" stroke-width="1.1"/><path d="M6.2 6.2L9 9" stroke="#555" stroke-width="1.2"/></svg><div class="t" style="left:156px;top:79px;font-size:5.6px;color:#666;font-weight:normal;">搜索或输入 Web 地址</div><svg class="a" style="left:216px;top:117px" width="44" height="44" viewBox="0 0 24 24">
<defs>
<linearGradient id="eg1big" x1="0" y1="0.1" x2="1" y2="0.7"><stop offset="0" stop-color="#33b6f2"/><stop offset="0.45" stop-color="#2ec8c8"/><stop offset="1" stop-color="#62e45c"/></linearGradient>
<linearGradient id="eg3big" x1="0" y1="0" x2="0.2" y2="1"><stop offset="0" stop-color="#1c9ce6"/><stop offset="1" stop-color="#0a5fc0"/></linearGradient>
<linearGradient id="eg2big" x1="0" y1="0" x2="0.3" y2="1"><stop offset="0" stop-color="#0b4f98"/><stop offset="1" stop-color="#0f4c8f"/></linearGradient>
<clipPath id="ecbig"><circle cx="12" cy="12" r="11.8"/></clipPath>
</defs>
<g clip-path="url(#ecbig)">
<rect width="24" height="24" fill="url(#eg1big)"/>
<path d="M0 13 C0.3 8.6 4 6 8.3 6 C11.6 6 14.3 8 15.2 10.6 L15.2 24 L0 24Z" fill="url(#eg3big)"/>
<path d="M8 15.2 C8 11.6 10.1 9.4 12.7 9.4 C14.7 9.4 16 11 16 12.9 C16 15.9 18.6 17.4 21.6 17.4 C22.6 17.4 23.4 17.2 24 16.9 L24 24 L12 24 C9.5 22 8 18.6 8 15.2Z" fill="url(#eg2big)"/>
<circle cx="12.7" cy="12.9" r="3" fill="#b8ecea"/>
<path d="M12.5 15.6 C15 16.6 18.6 16.6 24 15 L24 17.3 C19.5 18.4 15.5 18.4 12.8 16.6Z" fill="#b8ecea"/>
</g>
</svg><div class="a" style="left:476px;top:40px;width:17px;height:220px;background:#f7f7f7;"></div><div class="t" style="left:481px;top:31px;font-size:8px;color:#666;font-weight:normal;">⌕</div><div class="a" style="left:482px;top:48.0px;width:7px;height:7px;background:#3a7ae0;border-radius:2px;opacity:0.8"></div><div class="a" style="left:482px;top:63.6px;width:7px;height:7px;background:#e05a20;border-radius:2px;opacity:0.8"></div><div class="a" style="left:482px;top:79.2px;width:7px;height:7px;background:#7a5ae0;border-radius:2px;opacity:0.8"></div><div class="a" style="left:482px;top:94.8px;width:7px;height:7px;background:#5a40d0;border-radius:2px;opacity:0.8"></div><div class="a" style="left:482px;top:110.4px;width:7px;height:7px;background:#1a70c0;border-radius:2px;opacity:0.8"></div><div class="a" style="left:482px;top:126.0px;width:7px;height:7px;background:#1a88e0;border-radius:2px;opacity:0.8"></div><div class="a" style="left:482px;top:141.6px;width:7px;height:7px;background:#6a40c0;border-radius:2px;opacity:0.8"></div></div></div>
<div class="menu" style="left:1355px;top:417px;width:417px;height:288px;background:linear-gradient(180deg,#e3ecf1 0%,#e6eaef 30%,#ebe7ec 55%,#efe4e9 80%,#f0e3e8 100%)">
  <div class="a" style="left:7px;top:100px;width:404px;height:41px;border-radius:6px;background:rgba(120,80,100,0.065)"></div>
  <div class="mi" style="left:65px;top:16px">左侧贴靠</div>
  <div class="mi" style="left:65px;top:63px">右侧贴靠</div>
  <div class="mi" style="left:65px;top:110px">移动到</div>
  <svg class="a" style="left:382px;top:113px" width="10" height="16" viewBox="0 0 10 16"><path d="M2.5 2.5l5.5 5.5-5.5 5.5" fill="none" stroke="#555" stroke-width="1.3"/></svg>
  <div class="mi" style="left:65px;top:157px">在所有桌面上显示此窗口</div>
  <div class="mi" style="left:65px;top:204px">在所有桌面上显示此应用的窗口</div>
  <div class="mi" style="left:65px;top:251px">关闭</div>
  <div class="mi" style="left:342px;top:251px;font-size:17.6px;color:#606060">Delete</div>
</div>
<div class="menu" style="left:1188px;top:516px;width:171px;height:100px;background:linear-gradient(180deg,#efe2ee,#f1e0ec)">
  <div class="mi" style="left:65px;top:15px">桌面 2</div>
  <div class="mi" style="left:65px;top:62px">新建桌面</div>
</div>
<div class="a" style="left:0;top:980px;width:1920px;height:30px;background:linear-gradient(90deg,#625a7e 0px,#645a86 300px,#6c5a9a 420px,#8a60b0 520px,#b478c4 640px,#d8a0dc 800px,#e4a8e0 950px,#e098c8 1100px,#d07888 1250px,#b06262 1450px,#8c5e5e 1700px,#7a5a5a 1920px)"></div>
<div class="a" style="left:14px;top:734px;width:1892px;height:259px;border-radius:9px;background:linear-gradient(90deg,#dcd8e2 0%,#e2d8ea 30%,#ecdcf0 50%,#f0e0ea 65%,#e8dcdc 85%,#e4dcdc 100%)"></div>
<div class="a" style="left:404px;top:743px;width:363px;height:242px;background:rgba(255,255,255,0.45);border-radius:6px;box-shadow:0 1px 2px rgba(0,0,0,0.1)"></div>
<div class="dl" style="left:419px;top:756px">桌面 1</div>
<div class="a" style="left:420px;top:789px;width:331px;height:186px;border-radius:5px;overflow:hidden"><svg class="a" style="left:0;top:0" width="331" height="186" viewBox="0 0 331 186">
<defs>
<clipPath id="cpd1"><rect width="331" height="186" rx="5"/></clipPath>
<radialGradient id="brd1" cx="255" cy="165" r="120" gradientUnits="userSpaceOnUse"><stop offset="0" stop-color="#701808"/><stop offset="0.45" stop-color="#3c0a0c"/><stop offset="1" stop-color="#0a0220" stop-opacity="0"/></radialGradient>
<radialGradient id="spd1" cx="172" cy="118" r="112" gradientUnits="userSpaceOnUse"><stop offset="0" stop-color="#c018c0"/><stop offset="0.35" stop-color="#9a0cb4"/><stop offset="0.7" stop-color="#4a0c88"/><stop offset="1" stop-color="#140634" stop-opacity="0"/></radialGradient>
<radialGradient id="bvd1" cx="118" cy="150" r="70" gradientUnits="userSpaceOnUse"><stop offset="0" stop-color="#4010b8" stop-opacity="0.95"/><stop offset="1" stop-color="#4a10b0" stop-opacity="0"/></radialGradient>
<radialGradient id="rrd1" cx="240" cy="110" r="70" gradientUnits="userSpaceOnUse"><stop offset="0" stop-color="#801050" stop-opacity="0.6"/><stop offset="1" stop-color="#801050" stop-opacity="0"/></radialGradient>
<linearGradient id="rimd1" x1="0" y1="-35" x2="0" y2="179" gradientUnits="userSpaceOnUse"><stop offset="0.42" stop-color="#ff2a6a" stop-opacity="0"/><stop offset="0.66" stop-color="#ff3a70" stop-opacity="0.55"/><stop offset="0.85" stop-color="#ff5a9a"/><stop offset="0.97" stop-color="#ffe0a0"/><stop offset="1" stop-color="#fff4c0"/></linearGradient>
<radialGradient id="bg2d1" cx="166" cy="186" r="90" gradientUnits="userSpaceOnUse"><stop offset="0" stop-color="#e8a0a0" stop-opacity="0.8"/><stop offset="0.5" stop-color="#a04070" stop-opacity="0.4"/><stop offset="1" stop-color="#a04070" stop-opacity="0"/></radialGradient>
<radialGradient id="lbd1" cx="166" cy="165" r="75" gradientUnits="userSpaceOnUse"><stop offset="0" stop-color="#e8a8f8" stop-opacity="0.35"/><stop offset="1" stop-color="#f0a0f0" stop-opacity="0"/></radialGradient>
<filter id="fbd1" x="-0.2" y="-0.2" width="1.4" height="1.4"><feGaussianBlur stdDeviation="1.6"/></filter><radialGradient id="bg3d1"><stop offset="0" stop-color="#ffb0c8" stop-opacity="0.55"/><stop offset="1" stop-color="#ffb0c8" stop-opacity="0"/></radialGradient>
</defs>
<g clip-path="url(#cpd1)">
<rect width="331" height="186" fill="#0a0222"/>
<rect width="331" height="186" fill="url(#brd1)"/>
<rect width="331" height="186" fill="url(#bg2d1)"/>
<circle cx="166" cy="72" r="107" fill="url(#spd1)"/>
<circle cx="166" cy="72" r="107" fill="url(#rrd1)"/>
<circle cx="166" cy="72" r="107" fill="url(#bvd1)"/>
<circle cx="166" cy="72" r="106" fill="url(#lbd1)"/>
<ellipse cx="166" cy="184" rx="110" ry="22" fill="url(#bg3d1)"/>
<circle cx="166" cy="72" r="105.5" fill="none" stroke="url(#rimd1)" stroke-width="3.5" filter="url(#fbd1)"/>
<circle cx="166" cy="72" r="106" fill="none" stroke="url(#rimd1)" stroke-width="2"/>
</g>
</svg><div class="a" style="left:17px;top:9px;width:493px;height:260px;transform-origin:0 0;transform:scale(0.6024,0.6);overflow:hidden;background:#fff"><div class="a" style="left:0px;top:31px;width:493px;height:220px;background:#efefef;"></div><div class="a" style="left:487px;top:31px;width:1px;height:220px;background:#d8d8d8;"></div><div class="a" style="left:90px;top:20px;width:306px;height:117px;background:#fff;border:1px solid #d4d4d4;border-top:none"></div><div class="a" style="left:90px;top:142px;width:306px;height:110px;background:#fff;border:1px solid #d4d4d4;border-bottom:none"></div><div class="a" style="left:127px;top:99px;width:9px;height:1px;background:#aaa;"></div><div class="a" style="left:136px;top:99px;width:1px;height:9px;background:#aaa;"></div><div class="a" style="left:350px;top:99px;width:9px;height:1px;background:#aaa;"></div><div class="a" style="left:350px;top:99px;width:1px;height:9px;background:#aaa;"></div><div class="a" style="left:127px;top:179px;width:9px;height:1px;background:#aaa;"></div><div class="a" style="left:136px;top:170px;width:1px;height:10px;background:#aaa;"></div><div class="a" style="left:350px;top:179px;width:9px;height:1px;background:#aaa;"></div><div class="a" style="left:350px;top:170px;width:1px;height:10px;background:#aaa;"></div><div class="t" style="left:136px;top:26px;width:214px;overflow:hidden;font-size:6.6px;color:#000;font-weight:500"><b>是否能够</b>，使用虚拟桌面能够让您的电脑更加流畅地运行，减少不必要的卡顿现象，提高</div><div class="t" style="left:136px;top:42px;width:28px;overflow:hidden;font-size:6.6px;color:#000;font-weight:500">的资源占用。</div><div class="a" style="left:146px;top:61px;width:2px;height:2px;background:#222;border-radius:50%"></div><div class="t" style="left:150px;top:58px;width:44px;overflow:hidden;font-size:6.6px;color:#111;font-weight:bold">自定义任务栏图标</div><div class="t" style="left:136px;top:74px;width:214px;overflow:hidden;font-size:6.6px;color:#000;font-weight:500"><b>虚拟桌面个7</b> IT，您可以创建一组桌面，并且每个桌面都有自己的任务栏，使用起来</div><div class="t" style="left:136px;top:90px;width:214px;overflow:hidden;font-size:6.6px;color:#000;font-weight:500">桥。 为使用户能够打开一个桌面， 您可以轻松地在不同的桌面之间切换和移动窗口</div><div class="t" style="left:136px;top:184px;width:169px;overflow:hidden;font-size:6.6px;color:#000;font-weight:500"><b>第 1、</b>您可以通过任务视图按钮来创建新桌面，并在桌面之间切换。</div><div class="t" style="left:136px;top:201px;width:49px;overflow:hidden;font-size:6.6px;color:#111;font-weight:bold">虚拟桌面管理器</div><div class="t" style="left:136px;top:217px;width:164px;overflow:hidden;font-size:6.6px;color:#000;font-weight:500">在开始之前，请确保您的电脑，并运行任务栏，确定任务视图按钮。</div><div class="t" style="left:136px;top:233px;width:214px;overflow:hidden;font-size:6.6px;color:#000;font-weight:500"><b>虚拟桌面个7</b> 选择新建桌面功能，并可以在多个桌面之间自由切换窗口和应用程序</div><div class="a" style="left:136px;top:249px;width:4px;height:2px;background:#444;"></div><div class="a" style="left:0px;top:0px;width:493px;height:31px;background:#f0f0f0;"></div><div class="a" style="left:5px;top:4px;width:8px;height:8px;background:#2b6fd0;border-radius:1px"></div><div class="t" style="left:20px;top:5px;font-size:5px;color:#b0b0b0;font-weight:normal;">AutoSave 关 ⬤ 🖫 ↶ ↷ ⋮</div><div class="t" style="left:108px;top:5px;font-size:5px;color:#b8b8b8;font-weight:normal;">新建 Microsoft Word 文档 - Word ∨</div><div class="a" style="left:207px;top:3px;width:130px;height:12px;background:#f4f4f4;border:1px solid #e2e2e2;border-radius:2px"></div><div class="t" style="left:218px;top:5px;font-size:5px;color:#c0c0c0;font-weight:normal;">⌕ Search</div><div class="t" style="left:400px;top:5.5px;font-size:4.3px;color:#b8b8b8;font-weight:normal;">Cole Philips</div><div class="a" style="left:425px;top:4px;width:9px;height:9px;background:radial-gradient(circle at 50% 40%,#c08060,#603020 60%,#404050);border-radius:50%"></div><div class="t" style="left:461px;top:4px;font-size:6px;color:#d0d0d0;font-weight:normal;">—</div><div class="t" style="left:474px;top:4px;font-size:6px;color:#d0d0d0;font-weight:normal;">▢</div><div class="t" style="left:486px;top:3px;font-size:7px;color:#c8c8c8;font-weight:normal;">✕</div><div class="t" style="left:6px;top:22px;font-size:5.5px;color:#2a2a2a;font-weight:normal;">File</div><div class="t" style="left:27px;top:22px;font-size:5.5px;color:#2a2a2a;font-weight:normal;">Home</div><div class="t" style="left:48px;top:22px;font-size:5.5px;color:#2a2a2a;font-weight:normal;">Insert</div><div class="t" style="left:66px;top:22px;font-size:5.5px;color:#2a2a2a;font-weight:normal;">Draw</div><div class="t" style="left:86px;top:22px;font-size:5.5px;color:#2a2a2a;font-weight:normal;">Design</div><div class="t" style="left:109px;top:22px;font-size:5.5px;color:#2a2a2a;font-weight:normal;">Layout</div><div class="t" style="left:133px;top:22px;font-size:5.5px;color:#2a2a2a;font-weight:normal;">References</div><div class="t" style="left:165px;top:22px;font-size:5.5px;color:#2a2a2a;font-weight:normal;">Mailings</div><div class="t" style="left:192px;top:22px;font-size:5.5px;color:#2a2a2a;font-weight:normal;">Review</div><div class="t" style="left:214px;top:22px;font-size:5.5px;color:#2a2a2a;font-weight:normal;">View</div><div class="t" style="left:234px;top:22px;font-size:5.5px;color:#2a2a2a;font-weight:normal;">Help</div><div class="a" style="left:391px;top:20px;width:33px;height:9px;background:#fafafa;border:1px solid #e0e0e0;border-radius:2px"></div><div class="t" style="left:394px;top:22px;font-size:5px;color:#444;font-weight:normal;">⌐Comments</div><div class="a" style="left:429px;top:20px;width:29px;height:9px;background:#fafafa;border:1px solid #e0e0e0;border-radius:2px"></div><div class="t" style="left:431px;top:22px;font-size:5px;color:#444;font-weight:normal;">✎Editing ∨</div><div class="a" style="left:462px;top:20px;width:27px;height:9px;background:#1f6fd8;border-radius:2px"></div><div class="t" style="left:465px;top:22px;font-size:5px;color:#fff;font-weight:normal;">⎘ Share∨</div><div class="a" style="left:0px;top:30px;width:493px;height:1px;background:#dadada;"></div><div class="a" style="left:0px;top:251px;width:493px;height:9px;background:#f3f3f3;"></div><div class="t" style="left:4px;top:252px;font-size:5px;color:#6a6a6a;font-weight:normal;">Page 1 of 4   1273 words   ⌸   Chinese (Simplified, Mainland China)   Text Predictions: On   ⚙Accessibility: Investigate</div><div class="t" style="left:360px;top:252px;font-size:5px;color:#666;font-weight:normal;">⚐Focus    ▤    ⌶    ▣    —         |          +  100%</div></div><div class="a" style="left:18px;top:37px;width:7px;height:7px;background:#f05a48;border-radius:1.5px"></div></div>
<div class="a" style="left:562px;top:981px;width:48px;height:5px;background:#0b5fc4;border-radius:3px"></div>
<div class="dl" style="left:792px;top:756px">桌面 2</div>
<div class="a" style="left:793px;top:789px;width:331px;height:186px;border-radius:5px;overflow:hidden"><svg class="a" style="left:0;top:0" width="331" height="186" viewBox="0 0 331 186">
<defs>
<clipPath id="cpd2"><rect width="331" height="186" rx="5"/></clipPath>
<radialGradient id="brd2" cx="255" cy="165" r="120" gradientUnits="userSpaceOnUse"><stop offset="0" stop-color="#701808"/><stop offset="0.45" stop-color="#3c0a0c"/><stop offset="1" stop-color="#0a0220" stop-opacity="0"/></radialGradient>
<radialGradient id="spd2" cx="172" cy="118" r="112" gradientUnits="userSpaceOnUse"><stop offset="0" stop-color="#c018c0"/><stop offset="0.35" stop-color="#9a0cb4"/><stop offset="0.7" stop-color="#4a0c88"/><stop offset="1" stop-color="#140634" stop-opacity="0"/></radialGradient>
<radialGradient id="bvd2" cx="118" cy="150" r="70" gradientUnits="userSpaceOnUse"><stop offset="0" stop-color="#4010b8" stop-opacity="0.95"/><stop offset="1" stop-color="#4a10b0" stop-opacity="0"/></radialGradient>
<radialGradient id="rrd2" cx="240" cy="110" r="70" gradientUnits="userSpaceOnUse"><stop offset="0" stop-color="#801050" stop-opacity="0.6"/><stop offset="1" stop-color="#801050" stop-opacity="0"/></radialGradient>
<linearGradient id="rimd2" x1="0" y1="-35" x2="0" y2="179" gradientUnits="userSpaceOnUse"><stop offset="0.42" stop-color="#ff2a6a" stop-opacity="0"/><stop offset="0.66" stop-color="#ff3a70" stop-opacity="0.55"/><stop offset="0.85" stop-color="#ff5a9a"/><stop offset="0.97" stop-color="#ffe0a0"/><stop offset="1" stop-color="#fff4c0"/></linearGradient>
<radialGradient id="bg2d2" cx="166" cy="186" r="90" gradientUnits="userSpaceOnUse"><stop offset="0" stop-color="#e8a0a0" stop-opacity="0.8"/><stop offset="0.5" stop-color="#a04070" stop-opacity="0.4"/><stop offset="1" stop-color="#a04070" stop-opacity="0"/></radialGradient>
<radialGradient id="lbd2" cx="166" cy="165" r="75" gradientUnits="userSpaceOnUse"><stop offset="0" stop-color="#e8a8f8" stop-opacity="0.35"/><stop offset="1" stop-color="#f0a0f0" stop-opacity="0"/></radialGradient>
<filter id="fbd2" x="-0.2" y="-0.2" width="1.4" height="1.4"><feGaussianBlur stdDeviation="1.6"/></filter><radialGradient id="bg3d2"><stop offset="0" stop-color="#ffb0c8" stop-opacity="0.55"/><stop offset="1" stop-color="#ffb0c8" stop-opacity="0"/></radialGradient>
</defs>
<g clip-path="url(#cpd2)">
<rect width="331" height="186" fill="#0a0222"/>
<rect width="331" height="186" fill="url(#brd2)"/>
<rect width="331" height="186" fill="url(#bg2d2)"/>
<circle cx="166" cy="72" r="107" fill="url(#spd2)"/>
<circle cx="166" cy="72" r="107" fill="url(#rrd2)"/>
<circle cx="166" cy="72" r="107" fill="url(#bvd2)"/>
<circle cx="166" cy="72" r="106" fill="url(#lbd2)"/>
<ellipse cx="166" cy="184" rx="110" ry="22" fill="url(#bg3d2)"/>
<circle cx="166" cy="72" r="105.5" fill="none" stroke="url(#rimd2)" stroke-width="3.5" filter="url(#fbd2)"/>
<circle cx="166" cy="72" r="106" fill="none" stroke="url(#rimd2)" stroke-width="2"/>
</g>
</svg><div class="a" style="left:19px;top:37px;width:7px;height:7px;background:#f05a48;border-radius:1.5px"></div></div>
<div class="dl" style="left:1166px;top:753px">新建桌面</div>
<div class="a" style="left:1167px;top:789px;width:330px;height:185px;background:linear-gradient(135deg,#fefdfe,#fdfafc);border-radius:5px;border:1px solid rgba(0,0,0,0.06)"></div>
<svg class="a" style="left:1320px;top:871px" width="20" height="20" viewBox="0 0 20 20"><path d="M10 0.5v19M0.5 10h19" stroke="#222" stroke-width="1.4"/></svg>
<div class="a" style="left:0;top:1008px;width:1920px;height:72px;background:linear-gradient(90deg,#e4e0ee 0%,#e9e0f0 30%,#f0dcf0 48%,#f2dcea 62%,#f2dede 80%,#f0e0de 100%);border-top:1px solid rgba(255,255,255,0.35)"></div>
<svg class="a" style="left:31px;top:1027px" width="35" height="35" viewBox="0 0 35 35">
<defs><linearGradient id="st" x1="0" y1="0" x2="1" y2="1"><stop offset="0" stop-color="#4fd0fa"/><stop offset="1" stop-color="#0a64d8"/></linearGradient></defs>
<path d="M1.5 0h15v16.5H0V1.5A1.5 1.5 0 0 1 1.5 0z M18.5 0h15A1.5 1.5 0 0 1 35 1.5v15H18.5z M0 18.5h16.5V35h-15A1.5 1.5 0 0 1 0 33.5z M18.5 18.5H35v15a1.5 1.5 0 0 1-1.5 1.5h-15z" fill="url(#st)"/>
</svg>
<div class="a" style="left:90px;top:1022px;width:146px;height:44px;background:#f5f3f8;border-radius:22px;box-shadow:0 1px 1px rgba(0,0,0,0.08)"></div>
<svg class="a" style="left:131px;top:1033px" width="22" height="22" viewBox="0 0 22 22"><circle cx="9" cy="9" r="7.3" fill="none" stroke="#1a1a1a" stroke-width="1.8"/><path d="M14.3 14.3l6 6" stroke="#1a1a1a" stroke-width="2" stroke-linecap="round"/></svg>
<div class="t" style="left:160px;top:1035px;font-size:18.5px;color:#1a1a1a">搜索</div>
<div class="a" style="left:247px;top:1016px;width:56px;height:56px;background:rgba(255,255,255,0.5);border-radius:5px;box-shadow:0 1px 1px rgba(0,0,0,0.06)"></div>
<svg class="a" style="left:258px;top:1027px" width="34" height="34" viewBox="0 0 34 34">
<defs><linearGradient id="tv1" x1="0" y1="0" x2="0" y2="1"><stop offset="0" stop-color="#fafafa"/><stop offset="1" stop-color="#e6e6e6"/></linearGradient>
<linearGradient id="tv2" x1="0" y1="0" x2="0" y2="1"><stop offset="0" stop-color="#444"/><stop offset="1" stop-color="#1a1a1a"/></linearGradient></defs>
<rect x="1" y="13" width="24" height="20" rx="2" fill="url(#tv2)"/>
<rect x="10" y="0" width="24" height="21" rx="2" fill="url(#tv1)"/>
<rect x="10" y="13" width="15" height="8" fill="#c8c8c8" opacity="0.9"/>
</svg>
<svg class="a" style="left:322px;top:1026px" width="37" height="37" viewBox="0 0 24 24">
<defs>
<linearGradient id="eg1tb" x1="0" y1="0.1" x2="1" y2="0.7"><stop offset="0" stop-color="#33b6f2"/><stop offset="0.45" stop-color="#2ec8c8"/><stop offset="1" stop-color="#62e45c"/></linearGradient>
<linearGradient id="eg3tb" x1="0" y1="0" x2="0.2" y2="1"><stop offset="0" stop-color="#1c9ce6"/><stop offset="1" stop-color="#0a5fc0"/></linearGradient>
<linearGradient id="eg2tb" x1="0" y1="0" x2="0.3" y2="1"><stop offset="0" stop-color="#0b4f98"/><stop offset="1" stop-color="#0f4c8f"/></linearGradient>
<clipPath id="ectb"><circle cx="12" cy="12" r="11.8"/></clipPath>
</defs>
<g clip-path="url(#ectb)">
<rect width="24" height="24" fill="url(#eg1tb)"/>
<path d="M0 13 C0.3 8.6 4 6 8.3 6 C11.6 6 14.3 8 15.2 10.6 L15.2 24 L0 24Z" fill="url(#eg3tb)"/>
<path d="M8 15.2 C8 11.6 10.1 9.4 12.7 9.4 C14.7 9.4 16 11 16 12.9 C16 15.9 18.6 17.4 21.6 17.4 C22.6 17.4 23.4 17.2 24 16.9 L24 24 L12 24 C9.5 22 8 18.6 8 15.2Z" fill="url(#eg2tb)"/>
<circle cx="12.7" cy="12.9" r="3" fill="#e8e0ef"/>
<path d="M12.5 15.6 C15 16.6 18.6 16.6 24 15 L24 17.3 C19.5 18.4 15.5 18.4 12.8 16.6Z" fill="#e8e0ef"/>
</g>
</svg>
<svg class="a" style="left:322px;top:1048px" width="19" height="15" viewBox="0 0 19 15"><rect x="6" y="0" width="7" height="3" rx="1" fill="none" stroke="#6a4010" stroke-width="1.2"/><rect x="0" y="2.5" width="19" height="12.5" rx="1.5" fill="#d88a1a"/><rect x="0" y="2.5" width="19" height="5" fill="#f0a830"/><rect x="8.5" y="6.5" width="2" height="2" fill="#fde080"/></svg>
<div class="a" style="left:337px;top:1068px;width:9px;height:5px;background:#7a7a7a;border-radius:3px"></div>
<svg class="a" style="left:388px;top:1027px" width="37" height="34" viewBox="0 0 37 34">
<rect x="10" y="0" width="26" height="26" rx="1" fill="#0a64c8"/><rect x="10" y="16" width="26" height="10" fill="#1490df"/>
<rect x="10" y="8" width="9" height="8" fill="#1490df"/><rect x="19" y="0" width="9" height="8" fill="#28a8ea"/><rect x="28" y="8" width="8" height="8" fill="#50d9ff"/><rect x="19" y="8" width="9" height="8" fill="#28a8ea"/><rect x="28" y="0" width="8" height="8" fill="#1490df"/>
<path d="M8 14l14 9 14-9v18a2 2 0 0 1-2 2H10a2 2 0 0 1-2-2z" fill="#1a90e0"/>
<path d="M8 34l28-20v18a2 2 0 0 1-2 2z" fill="#2aa0e8"/><path d="M8 14l14 9 14-9" fill="none" stroke="#0f78d4" stroke-width="0.8" opacity="0.6"/>
<rect x="0" y="7" width="18" height="17" rx="1.5" fill="#0f6cd0"/>
<text x="9" y="20.5" font-family="Liberation Sans" font-weight="bold" font-size="12" fill="#fff" text-anchor="middle">O</text>
</svg>
<svg class="a" style="left:455px;top:1027px" width="36" height="33" viewBox="0 0 36 33">
<defs><linearGradient id="ftb" x1="0" y1="0" x2="0" y2="1"><stop offset="0" stop-color="#ffe27a"/><stop offset="1" stop-color="#ffc83a"/></linearGradient></defs>
<path d="M0 1.5A1.5 1.5 0 0 1 1.5 0h10l3 3H34.5A1.5 1.5 0 0 1 36 4.5V8H0z" fill="#e8a810"/>
<rect x="0" y="4" width="36" height="29" rx="1.5" fill="url(#ftb)"/>
<path d="M6 33v-8a3 3 0 0 1 3-3h18a3 3 0 0 1 3 3v8z" fill="#1a88e0"/>
<rect x="11" y="27" width="14" height="1.5" fill="#0a4a90"/>
</svg>
<div class="a" style="left:469px;top:1068px;width:9px;height:5px;background:#7a7a7a;border-radius:3px"></div>
<div class="a" style="left:511px;top:1016px;width:56px;height:56px;background:rgba(255,255,255,0.5);border-radius:5px;box-shadow:0 1px 1px rgba(0,0,0,0.06)"></div>
<svg class="a" style="left:520px;top:1026px" width="37" height="37" viewBox="0 0 24 24">
<defs><linearGradient id="wg520" x1="0" y1="0" x2="0" y2="1"><stop offset="0" stop-color="#41a5ee"/><stop offset="0.33" stop-color="#2b7cd3"/><stop offset="0.66" stop-color="#185abd"/><stop offset="1" stop-color="#103f91"/></linearGradient></defs>
<rect x="6" y="1" width="17" height="22" rx="1.2" fill="#41a5ee"/>
<rect x="6" y="6.5" width="17" height="5.5" fill="#2b7cd3"/>
<rect x="6" y="12" width="17" height="5.5" fill="#185abd"/>
<path d="M6 17.5h17v4.3a1.2 1.2 0 0 1-1.2 1.2H7.2A1.2 1.2 0 0 1 6 21.8z" fill="#103f91"/>
<rect x="0.5" y="5.5" width="12.5" height="12.5" rx="1" fill="#185abd"/>
<path d="M2.6 8.3h1.5l1.1 5.2 1.2-5.2h1.3l1.2 5.2 1.1-5.2h1.4l-1.8 7h-1.3L7 10.2l-1.3 5.1H4.4z" fill="#fff"/>
</svg>
<div class="a" style="left:527px;top:1068px;width:24px;height:5px;background:#0f6cd0;border-radius:3px"></div>
<svg class="a" style="left:1444px;top:1038px" width="18" height="11" viewBox="0 0 18 11"><path d="M1.5 9.5L9 2l7.5 7.5" fill="none" stroke="#1a1a1a" stroke-width="1.8"/></svg>
<svg class="a" style="left:1488px;top:1035px" width="26" height="18" viewBox="0 0 26 18">
<path d="M9 12 a7 7 0 0 1 13 -1.5 a4.5 4.5 0 0 1 3.5 5 L25 17 H9z" fill="#0364b8"/>
<path d="M1 13.5 a4.5 4.5 0 0 1 5.5 -4.5 a6.5 6.5 0 0 1 11.5 1 a4.5 4.5 0 0 1 1 0 L9.5 17.5 H3.5 a3 3 0 0 1 -2.5 -4z" fill="#0f78d4"/>
<path d="M4 17.5 L18.5 10 a4.5 4.5 0 0 1 7 4.2 a3.3 3.3 0 0 1 -3 3.3 z" fill="#28a8ea"/>
<path d="M1 13.5 a3 3 0 0 0 2.5 4 H14 L6 10.5z" fill="#1490df"/>
</svg>
<svg class="a" style="left:1539px;top:1032px" width="22" height="25" viewBox="0 0 22 25">
<path d="M9 1h4v4h7v10h-7v9h-4v-9H2V5h7z" fill="#fff" stroke="#8a8a8a" stroke-width="1.2"/>
<rect x="5" y="7.5" width="12" height="5" fill="none" stroke="#8a8a8a" stroke-width="1.2"/>
<path d="M11 5v10" stroke="#8a8a8a" stroke-width="1.2"/>
</svg>
<svg class="a" style="left:1593px;top:1032px" width="26" height="25" viewBox="0 0 26 25">
<path d="M3 3.5L20 0.5l5 18-17 5.5z" fill="#2db52d"/>
<path d="M18 7c-2-1.5-6-1.5-8 .3-2 1.8.5 3.5 3 4 2.5.5 4 2 2 3.8-2 1.8-6 1.2-8-.5" fill="none" stroke="#fff" stroke-width="2.8" stroke-linecap="round"/>
</svg>
<svg class="a" style="left:1650px;top:1034px" width="26" height="19" viewBox="0 0 26 19">
<path d="M1.5 6.5a16 16 0 0 1 23 0M5 10a11 11 0 0 1 16 0M8.5 13.5a6 6 0 0 1 9 0" fill="none" stroke="#1a1a1a" stroke-width="1.6" stroke-linecap="round"/>
<circle cx="13" cy="16.8" r="1.7" fill="#1a1a1a"/>
</svg>
<svg class="a" style="left:1687px;top:1034px" width="25" height="21" viewBox="0 0 25 21">
<path d="M1 7h4l6-5.5v18L5 14H1z" fill="none" stroke="#1a1a1a" stroke-width="1.5" stroke-linejoin="round"/>
<path d="M14.5 7.5a4 4 0 0 1 0 6M17.5 4.5a8.5 8.5 0 0 1 0 12M20.5 1.5a13 13 0 0 1 0 18" fill="none" stroke="#1a1a1a" stroke-width="1.5" stroke-linecap="round"/>
</svg>
<svg class="a" style="left:1723px;top:1036px" width="25" height="16" viewBox="0 0 25 16">
<rect x="0.8" y="0.8" width="20" height="14" rx="3" fill="none" stroke="#1a1a1a" stroke-width="1.5"/>
<rect x="3" y="3" width="15.5" height="9.6" rx="1" fill="#1a1a1a"/>
<rect x="21.5" y="5" width="2.5" height="6" rx="1" fill="#1a1a1a"/>
</svg>
<div class="t" style="left:1812px;top:1024px;font-size:17.6px;letter-spacing:0.2px;color:#1a1a1a">14:28</div>
<div class="t" style="left:1772px;top:1048px;font-size:17.6px;letter-spacing:0.5px;color:#1a1a1a">2024/7/25</div>
<svg class="a" style="left:1867px;top:1032px" width="22" height="24" viewBox="0 0 22 24">
<path d="M4 17V10a7 7 0 0 1 14 0v7l2.5 3h-19z" fill="none" stroke="#1a1a1a" stroke-width="1.5" stroke-linejoin="round"/>
<path d="M8.5 21.5a2.5 2.5 0 0 0 5 0" fill="none" stroke="#1a1a1a" stroke-width="1.5"/>
</svg>
<div class="t" style="left:1852px;top:1051px;font-size:20px;font-weight:bold;color:#a0a0a0;-webkit-text-stroke:1.6px #a0a0a0;text-shadow:2px 2px 0 #fff,-1px -1px 0 #fff,2px -1px 0 #fff,-1px 2px 0 #fff,0 2px 0 #fff,2px 0 0 #fff">元计算</div>
</body></html>
